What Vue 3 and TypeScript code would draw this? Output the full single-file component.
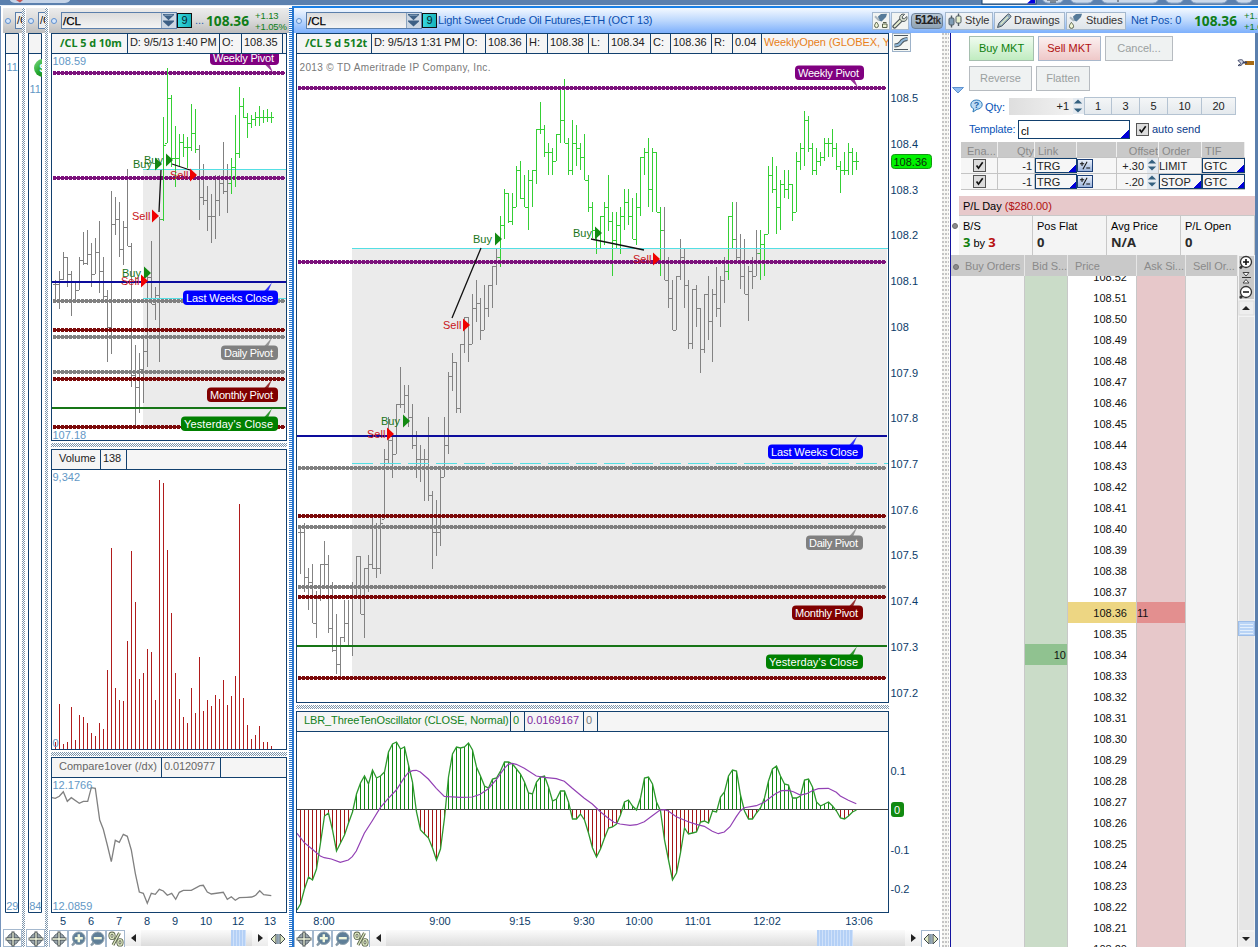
<script setup lang="ts">
interface Bar { x: number; hi: number; lo: number; open: number; close: number; up: boolean }
interface Level { y: number; kind: 'purple' | 'maroon' | 'gray' }
interface Tag { text: string; x: number; y: number; w: number; tx: number; len: number; fill: string; stem: string }
interface Signal { side: 'Buy' | 'Sell'; x: number; y: number; arrow: number }

const STEP = 4

// Each row is high, low, close in plot pixels
const rawMain: number[][] = [
  [528,574,532],[523,592,577],[568,610,582],[564,623,623],[591,638,598],[564,601,564],[541,585,564],[555,633,628],[582,652,650],[614,674,664],
  [637,677,637],[600,642,623],[600,646,645],[582,656,596],[556,597,556],[556,614,614],[568,638,568],[555,592,564],[517,569,568],[523,578,568],
  [517,574,523],[449,519,459],[417,463,440],[433,478,454],[404,454,404],[367,408,404],[385,413,395],[385,427,417],[404,449,445],[431,478,459],
  [445,482,459],[449,501,459],[417,501,495],[491,569,532],[500,556,532],[469,546,477],[417,477,445],[372,454,376],[353,391,362],[362,413,408],
  [344,413,344],[317,353,317],[317,362,344],[294,344,308],[280,322,303],[298,340,330],[285,330,308],[285,317,285],[266,308,266],[249,285,257],
  [216,267,225],[189,239,193],[193,223,221],[193,225,207],[166,207,170],[161,199,198],[175,207,207],[170,230,180],[170,207,170],[129,184,129],
  [102,134,129],[125,157,152],[143,175,152],[148,175,161],[134,161,134],[88,143,120],[79,143,143],[138,175,170],[120,175,143],[125,166,148],
  [143,170,157],[134,180,180],[175,212,207],[202,238,230],[230,254,240],[216,248,216],[202,245,207],[175,231,221],[212,276,240],[212,248,225],
  [207,254,216],[189,230,202],[189,225,216],[198,239,239],[193,245,207],[157,216,157],[148,175,152],[138,207,189],[148,212,152],[152,212,212],
  [207,276,230],[207,280,280],[257,308,298],[280,330,330],[276,330,276],[239,280,257],[248,308,285],[280,349,343],[289,349,289],[285,327,308],
  [308,373,349],[294,353,294],[276,340,321],[289,362,294],[267,317,308],[276,327,280],[257,303,271],[216,280,216],[202,248,239],[202,262,257],
  [234,289,276],[239,294,294],[266,321,271],[257,289,276],[230,276,253],[230,280,244],[234,276,234],[166,234,175],[157,193,189],[166,234,207],
  [180,230,184],[170,198,189],[170,199,184],[184,221,212],[152,212,161],[143,170,148],[111,166,120],[116,152,148],[143,175,170],[148,175,161],
  [152,166,157],[138,161,143],[138,157,143],[129,157,148],[143,170,166],[161,193,170],[152,175,170],[143,175,152],[148,175,161],[152,170,161],
]
const rawSide: number[][] = [
  [280,300,284],[271,309,279],[252,280,257],[257,287,274],[271,316,300],[282,300,290],[257,290,260],[232,265,263],[230,265,254],[243,287,274],
  [238,274,252],[221,293,271],[257,300,296],[290,362,327],[191,354,224],[197,235,219],[202,257,249],[221,265,227],[169,246,246],[243,387,375],
  [345,425,387],[353,413,369],[337,403,351],[273,367,277],[241,304,304],[287,320,295],[217,362,219],[117,221,145],[68,143,98],[95,167,158],
  [126,187,158],[134,167,142],[134,157,147],[137,168,147],[104,151,133],[109,153,149],[145,220,197],[164,205,200],[186,231,216],[194,243,216],
  [175,239,200],[175,216,183],[142,194,191],[164,213,183],[158,194,167],[115,187,153],[87,158,106],[98,118,117],[113,138,123],[115,128,119],
  [112,126,117],[106,126,117],[110,123,117],[109,122,117],[112,123,117],
]
const build = (raw: number[][], x0: number, up: (k: number) => boolean): Bar[] =>
  raw.map(([hi, lo, close], k) => ({ x: x0 + k * STEP, hi, lo, close, open: k ? raw[k - 1][2] : close, up: up(k) }))

const mainBars = build(rawMain, 300, k => (k >= 50 && k <= 90) || k === 107 || k === 108 || k >= 115)
const sideBars = build(rawSide, 55, k => (k >= 27 && k <= 35) || k >= 44)

// One path per colour; ticks are clamped to the bar's own range
function barPath(bars: Bar[], up: boolean): string {
  return bars.filter(b => b.up === up).map(b => {
    const open = Math.min(b.lo, Math.max(b.hi, b.open))
    return `M${b.x} ${b.hi}h1V${b.lo}h-1zM${b.x - 2} ${open}h2v1h-2zM${b.x + 1} ${b.close}h2v1h-2z`
  }).join('')
}

const volume = [742,704,744,742,707,740,715,717,723,733,736,723,729,670,548,688,700,701,641,551,602,679,673,649,652,700,480,483,550,613,673,699,717,723,688,713,657,711,700,706,695,699,680,705,696,676,504,698,725,739,735,726,742,742,746]
const volumePath = volume.map((y, k) => `M${55 + k * STEP} ${y}h1V749h-1z`).join('')

const compare = '52,797.7 55.3,798.3 59.3,796.3 63.3,791.7 67.3,801.3 71.3,797.7 79.3,803.3 83.3,801.3 87.7,801.3 91.3,787.7 95.3,788.3 99.7,820 103.3,829.3 107.3,845 111.3,861.7 115.3,840.3 119.3,842.3 123.3,834.3 127.3,836.3 131.3,850 135.3,873.3 139.3,892 143.3,893.3 147.3,903.3 151.3,893.3 155.3,894.3 159.3,889.3 163.3,891 167.3,895.3 171.7,893.3 175.7,899.3 179.3,892.3 183.3,890.3 191.3,890.3 200,885.7 203.3,885.3 207.3,892 211.3,894 223.3,892.3 227.3,899.3 231.3,896.7 235.3,900.3 239.3,897.7 246.7,897.3 251.7,897 255.7,895.3 259.7,890.7 263.7,894.7 271.3,895.7'

const osc = [904,889,877,880,869,843,816,813,830,851,843,835,823,812,794,783,776,784,770,778,776,772,752,744,742,749,747,765,782,812,830,834,838,848,860,849,818,777,754,747,748,747,743,750,767,776,786,788,779,778,771,762,762,764,769,774,782,793,794,782,777,776,787,801,799,791,791,802,819,819,814,820,833,848,857,849,838,828,827,824,815,802,800,806,810,798,778,777,784,802,811,840,860,880,873,853,828,834,833,832,822,821,823,811,812,797,792,776,770,771,795,811,819,819,813,808,798,781,769,766,776,784,785,798,798,796,780,779,787,802,806,804,802,806,811,818,819,816,812,810]
const oscLine = '297,910 ' + osc.map((y, k) => `${300.5 + k * STEP},${y}`).join(' ')
const oscUp = osc.map((y, k) => y < 809 ? `M${300 + k * STEP} ${y}h1V809h-1z` : '').join('')
const oscDown = osc.map((y, k) => y > 810 ? `M${300 + k * STEP} 810h1V${y}h-1z` : '').join('')

const scale = (ox: number, pts: number[][]) => pts.map(([x, y]) => `${(ox + x / 3).toFixed(1)},${(705 + y / 3).toFixed(1)}`).join(' ')
const signalLine = scale(290, [[21,385],[43,413],[67,433],[91,453],[103,458],[124,462],[151,472],[175,465],[187,455],[199,438],[223,385],[247,347],[271,308],[295,280],[319,255],[343,218],[355,203],[367,197],[379,196],[391,201],[415,222],[439,250],[463,274],[475,275],[511,277],[547,276],[571,268],[595,251],[619,224],[643,190],[655,178],[667,175],[679,178],[703,190],[739,213],[763,217],[799,221],[823,229],[847,250],[883,280],[907,297],[931,320],[955,340]])
  + ' ' + scale(610, [[12,352],[30,357],[60,361],[80,359],[103,350],[127,332],[150,315],[163,314],[175,318],[199,335],[235,350],[259,358],[283,364],[307,379],[325,386],[343,381],[360,365],[379,335],[391,318],[403,308],[439,302],[463,292],[487,273],[499,265],[515,257],[535,256],[550,260],[571,270],[590,266],[607,257],[625,251],[655,250],[679,262],[691,273],[715,286],[739,296]])

const mainLevels: Level[] = [
  { y: 88, kind: 'purple' }, { y: 262, kind: 'purple' }, { y: 468, kind: 'gray' }, { y: 516, kind: 'maroon' },
  { y: 527, kind: 'gray' }, { y: 587, kind: 'gray' }, { y: 597, kind: 'maroon' }, { y: 678, kind: 'maroon' },
]
const sideLevels: Level[] = [
  { y: 73, kind: 'purple' }, { y: 178, kind: 'purple' }, { y: 301, kind: 'gray' }, { y: 330, kind: 'maroon' },
  { y: 337, kind: 'gray' }, { y: 372, kind: 'gray' }, { y: 379, kind: 'maroon' }, { y: 427, kind: 'maroon' },
]
const up = (r: number, y: number) => `${r - 14},${y + 1} ${r - 6},${y - 8} ${r - 10},${y + 1}`
const down = (r: number, y: number) => `${r - 15},${y + 13} ${r - 6},${y + 22} ${r - 10},${y + 13}`
const tag = (text: string, x: number, y: number, r: number, fill: string, flip = false): Tag =>
  ({ text, x, y, w: r - x, tx: x + 3, len: r - x - 8, fill, stem: flip ? down(r, y) : up(r, y) })
const mainTags: Tag[] = [
  tag('Weekly Pivot', 795, 65.5, 864, '#800080', true), tag('Last Weeks Close', 768, 444.5, 863, '#0000ff'),
  tag('Daily Pivot', 806, 535.5, 863, '#808080'), tag('Monthly Pivot', 792, 605.5, 863, '#800000'),
  tag("Yesterday's Close", 766, 654.5, 863, '#008000'),
]
const sideTags: Tag[] = [
  tag('Weekly Pivot', 210, 50.5, 279, '#800080', true), tag('Last Weeks Close', 183, 290.5, 278, '#0000ff'),
  tag('Daily Pivot', 221, 345.5, 278, '#808080'), tag('Monthly Pivot', 207, 387.5, 278, '#800000'),
  tag("Yesterday's Close", 181, 416.5, 278, '#008000'),
]
const mainSignals: Signal[] = [
  { side: 'Buy', x: 473, y: 239, arrow: 495 }, { side: 'Sell', x: 443, y: 325, arrow: 463 },
  { side: 'Buy', x: 573, y: 233, arrow: 595 }, { side: 'Sell', x: 633, y: 259, arrow: 653 },
  { side: 'Buy', x: 381, y: 421, arrow: 403 }, { side: 'Sell', x: 367, y: 434, arrow: 387 },
]
const sideSignals: Signal[] = [
  { side: 'Buy', x: 133, y: 164, arrow: 155 }, { side: 'Buy', x: 144, y: 160, arrow: 166 },
  { side: 'Sell', x: 170, y: 175, arrow: 190 }, { side: 'Sell', x: 132, y: 216, arrow: 152 },
  { side: 'Buy', x: 122, y: 273, arrow: 144 }, { side: 'Sell', x: 121, y: 281, arrow: 141 },
]
const priceAxis: [string, number][] = [
  ['108.5', 98], ['108.4', 144], ['108.3', 190], ['108.2', 235], ['108.1', 281], ['108', 327], ['107.9', 373],
  ['107.8', 418], ['107.7', 464], ['107.6', 510], ['107.5', 555], ['107.4', 601], ['107.3', 647], ['107.2', 693],
]
const sideTimes: [string, number][] = [['5', 63], ['6', 91], ['7', 119], ['8', 147], ['9', 175], ['10', 206], ['12', 238], ['13', 270]]
const mainTimes: [string, number][] = [['8:00', 324], ['9:00', 440], ['9:15', 520], ['9:30', 584], ['10:00', 639], ['11:01', 698], ['12:02', 767], ['13:06', 859]]

const mainInfo = ['O:', '108.36', 'H:', '108.38', 'L:', '108.34', 'C:', '108.36', 'R:', '0.04']
const tools = ['i-cross', 'i-plus', 'i-minus', 'i-percent']
const quantities = [1, 3, 5, 10, 20]
const orders = [
  { offset: '+.30', type: 'LIMIT', boxed: false },
  { offset: '-.20', type: 'STOP', boxed: true },
]
const stats = [['Pos Flat', '0'], ['Avg Price', 'N/A'], ['P/L Open', '0']]
const ladder = Array.from({ length: 33 }, (_, i) => (108.52 - i * 0.01).toFixed(2))
</script>

<template>
  <div class="app">
    <svg class="defs" width="0" height="0">
      <defs>
        <linearGradient id="ball" x1="0" x2="1" y1="0" y2="1"><stop offset="0" stop-color="#7fdc84" /><stop offset=".5" stop-color="#23a62d" /><stop offset="1" stop-color="#0c6b16" /></linearGradient>
        <symbol id="i-cross" viewBox="0 0 16 16">
          <circle cx="8" cy="8" r="5.6" fill="#9ba7ae" stroke="#5a666d" />
          <path d="M8 .6v14.8M.6 8h14.8" stroke="#3f474b" stroke-width="3" />
          <path d="M8 1.4v13.2M1.4 8h13.2" stroke="#f2f8dd" stroke-width="1.3" />
        </symbol>
        <symbol id="i-plus" viewBox="0 0 16 16">
          <path d="M4.5 9.5 1.2 13.8l1.6 1.4 4-3.4z" fill="#8598a6" />
          <circle cx="8.8" cy="7.2" r="6.3" fill="#5f7f98" stroke="#90a3af" />
          <path d="M8.8 3.2v8M4.8 7.2h8" stroke="#f2f8dd" stroke-width="2.4" />
        </symbol>
        <symbol id="i-minus" viewBox="0 0 16 16">
          <path d="M4.5 9.5 1.2 13.8l1.6 1.4 4-3.4z" fill="#8598a6" />
          <circle cx="8.8" cy="7.2" r="6.3" fill="#5f7f98" stroke="#90a3af" />
          <path d="M4.8 7.2h8" stroke="#f2f8dd" stroke-width="2.4" />
        </symbol>
        <symbol id="i-percent" viewBox="0 0 16 16">
          <g fill="none" stroke="#566047" stroke-width="3"><ellipse cx="4" cy="4.8" rx="2.1" ry="2.7" /><ellipse cx="12" cy="11.4" rx="2.1" ry="2.7" /><path d="M11.5 2 5 14" /></g>
          <g fill="none" stroke="#dfe9c4" stroke-width="1.3"><ellipse cx="4" cy="4.8" rx="2.1" ry="2.7" /><ellipse cx="12" cy="11.4" rx="2.1" ry="2.7" /><path d="M11.5 2 5 14" /></g>
        </symbol>
        <symbol id="i-expand" viewBox="0 0 16 16">
          <path d="M1 8 6 3v10zM15 8l-5-5v10z" fill="#dfe9c4" stroke="#3f474b" stroke-linejoin="round" />
          <path d="M7.3 3v10M8.8 3v10" stroke="#6b8599" stroke-width="1" />
        </symbol>
        <symbol id="i-double" viewBox="0 0 13 14">
          <path d="M1 1h11v1L6.5 7.2 1 2zM1 7.6h11v1L6.5 13.6 1 8.6z" fill="#3d6085" /><path d="M2.5 2.2h8" stroke="#8aa7c4" />
        </symbol>
        <symbol id="i-flask" viewBox="0 0 16 16">
          <path d="M5 3.5 8 1l6-.2-1 3.2L8.6 8.4 6 7.6z" fill="#557a99" /><path d="M2 4.2 6 7.8" stroke="#a9b6bf" stroke-width="2" />
          <path d="M3.4 9.4c-1.4 2-2 2.6-2 3.9a2.1 2.1 0 0 0 4.2 0c0-1.3-.8-1.9-2.2-3.9z" fill="#eef5d5" stroke="#58614b" />
        </symbol>
        <symbol id="i-flask2" viewBox="0 0 16 16">
          <path d="M5 3.500 8 1l6-.2-1 3.200L8.600 8.400 6 7.600z" fill="#557a99" /><path d="M2 3.200 6 7.200" stroke="#a9b6bf" stroke-width="2" />
          <path d="M3.400 9c-1.200 1.800-1.800 2.600-1.800 3.700a1.900 1.900 0 0 0 3.800 0c0-1.100-.7-1.900-2-3.700zM9.500 11h4.500v3.500H9.500zM10 9.500h3.500" fill="#eef5d5" stroke="#58614b" />
        </symbol>
        <symbol id="i-wrench" viewBox="0 0 16 16">
          <path d="M2.5 13.5 9 7" stroke="#4d565b" stroke-width="4.2" stroke-linecap="round" /><path d="M2.6 13.4 9 7" stroke="#e8f0d2" stroke-width="2" stroke-linecap="round" />
          <path d="M12.6 1.4 10.3 3.6l.2 2 2 .2 2.2-2.3c1 2.6-.9 5.300-3.700 4.900-2.800-.3-4.200-3.300-2.800-5.600.9-1.400 2.600-2.100 4.400-1.400z" fill="#d9e0cf" stroke="#4d565b" />
        </symbol>
        <symbol id="i-candles" viewBox="0 0 16 16">
          <path d="M4.5 2.5v12M11.5 .5v12.5" stroke="#4e5a62" stroke-width="1.4" /><rect x="2" y="5" width="5" height="7" rx="1.2" fill="#7f9db5" stroke="#4e5a62" /><rect x="9" y="3" width="5" height="7" rx="1.2" fill="#e6efcd" stroke="#4e5a62" />
        </symbol>
        <symbol id="i-pencil" viewBox="0 0 16 16">
          <path d="m1.500 14.500 1.300-4.300 8.600-8.700a1.500 1.500 0 0 1 2.200 0l.8.8a1.500 1.500 0 0 1 0 2.200l-8.600 8.600z" fill="#90a9bb" stroke="#4e5a62" /><path d="m4.500 11.500 7.500-7.700" stroke="#dce8c8" stroke-width="1.5" />
        </symbol>
        <symbol id="i-up" viewBox="0 0 12 8"><path d="M6 1.500 11 6.500H1z" fill="#34607f" /></symbol>
        <symbol id="i-check" viewBox="0 0 13 13">
          <path d="M3 6.600 5.300 9.600 10.300 2.600" fill="none" stroke="#111" stroke-width="2" />
        </symbol>
      </defs>
    </svg>

    <header class="strip">
      <svg width="1258" height="6" viewBox="0 0 1258 6">
        <rect width="1258" height="5" fill="#5b80ae" /><rect y="5" width="1258" height="1" fill="#e9f0f8" />
        <rect x="9" y="-12" width="62" height="15" rx="6" fill="#c5d4e8" /><path d="M16 0h7l-3 2.500z" fill="#c45454" />
        <rect x="982" y="-12" width="54" height="16" fill="#fff" stroke="#12406e" /><path d="M1027 3.500 1035 -4v7.500z" fill="#0000e0" />
        <g fill="#ccd9ea" stroke="#8ea9cb"><rect x="1042" y="-12" width="22" height="15" rx="6" /><rect x="1070" y="-12" width="24" height="15" rx="6" /><rect x="1101" y="-12" width="58" height="15" rx="6" /><rect x="1165" y="-12" width="19" height="15" rx="6" /><rect x="1190" y="-12" width="38" height="15" rx="6" /><rect x="1235" y="-12" width="18" height="15" rx="6" /></g>
        <path d="M1047 0h11M1050 2h6" stroke="#333c46" /><path d="M1118 0v2" stroke="#333c46" />
      </svg>
    </header>

    <div class="body">
      <div class="edge" />

      <section class="slim">
        <div class="head"><i class="ring" /><span class="stub">/C</span></div>
        <svg width="16" height="880" viewBox="3 33 16 880">
          <path d="M5.500 33v879.500H18.500V33.500H5.500M5 53.500h14" fill="none" stroke="#12406e" /><rect x="6" y="34" width="12" height="19" fill="#f4f4f4" />
          <text x="6.5" y="71" class="soft">11</text><text x="6.2" y="910" class="soft">29</text>
        </svg>
        <div class="slim-tool"><svg><use href="#i-cross" /></svg></div>
      </section>
      <div class="hatch" />
      <section class="slim">
        <div class="head"><i class="ring" /><span class="stub">/C</span></div>
        <svg width="16" height="880" viewBox="26 33 16 880">
          <path d="M28.500 33v879.500H41.500V33.500H28.500M28 53.500h14" fill="none" stroke="#12406e" /><rect x="29" y="34" width="12" height="19" fill="#f4f4f4" />
          <circle cx="43" cy="68" r="9" fill="url(#ball)" /><text x="39.5" y="72" class="ball">$</text>
          <text x="29.5" y="93" class="soft">11</text><text x="29.2" y="910" class="soft">84</text>
        </svg>
        <div class="slim-tool"><svg><use href="#i-cross" /></svg></div>
      </section>
      <div class="hatch" />

      <section class="side">
        <div class="head side-head">
          <i class="ring" />
          <div class="symbol"><b>/CL</b><span><svg><use href="#i-double" /></svg></span></div>
          <em class="nine">9</em><span class="dots">...</span><strong class="last">108.36</strong>
          <div class="delta"><span>+1.13</span><span>+1.05%</span></div>
        </div>
        <div class="frame side-frame">
          <div class="info side-info"><b>/CL 5 d 10m</b><span>D: 9/5/13 1:40 PM</span><span>O:</span><span>108.35</span><span /></div>
          <svg width="234" height="386" viewBox="52 54 234 386">
            <rect x="143" y="169" width="143" height="258" fill="#ebebeb" />
            <path :d="barPath(sideBars, false)" fill="#808080" />
            <path d="M143 169.500H286M143 298.500H286" stroke="#54dfe4" />
            <g v-for="l in sideLevels" :key="l.y" :class="l.kind">
              <path :d="`M53 ${l.y}H285`" stroke-width="2" /><path :d="`M53 ${l.y}H285`" stroke-width="4" stroke-dasharray="3 1" />
            </g>
            <path d="M52 282H286" stroke="#0c0c9c" stroke-width="2" /><path d="M52 408H286" stroke="#177517" stroke-width="2" />
            <path :d="barPath(sideBars, true)" fill="#35cf35" />
            <path d="M159 212 161 170M172 164 190 170" stroke="#111" stroke-width="1.3" />
            <g v-for="(s, i) in sideSignals" :key="i" :class="s.side">
              <text :x="s.x" :y="s.y + 4">{{ s.side }}</text><path :d="`M${s.arrow} ${s.y - 6.5}l7 6.500-7 6.500z`" />
            </g>
            <g v-for="t in sideTags" :key="t.text">
              <polygon :points="t.stem" :fill="t.fill" fill-opacity=".8" /><rect :x="t.x" :y="t.y" :width="t.w" height="14.5" rx="4" :fill="t.fill" />
              <text :x="t.tx" :y="t.y + 11.5" :textLength="t.len" fill="#fff">{{ t.text }}</text>
            </g>
            <text x="52.5" y="65" class="soft">108.59</text><text x="52.5" y="439" class="soft">107.18</text>
          </svg>
        </div>
        <div class="gap side-gap" />
        <div class="frame side-frame">
          <div class="info vol-info"><span class="pad">Volume</span><span>138</span><span /></div>
          <svg width="234" height="279" viewBox="52 470 234 279">
            <path :d="volumePath" fill="#b01c1c" />
            <text x="52.5" y="481" class="soft">9,342</text><text x="52.5" y="747" class="soft">0</text>
          </svg>
        </div>
        <div class="gap side-gap low-gap" />
        <div class="frame side-frame">
          <div class="info cmp-info"><span class="pad">Compare1over (/dx)</span><span>0.0120977</span><span /></div>
          <svg width="234" height="134" viewBox="52 778 234 134">
            <polyline :points="compare" fill="none" stroke="#808080" stroke-width="1.3" />
            <text x="52.5" y="789" class="soft">12.1766</text><text x="52.5" y="910" class="soft">12.0859</text>
          </svg>
        </div>
        <svg width="240" height="17" viewBox="49 914 240 17">
          <text v-for="t in sideTimes" :key="t[0]" :x="t[1]" y="926" text-anchor="middle" class="axis">{{ t[0] }}</text>
        </svg>
        <div class="toolbar">
          <span v-for="t in tools" :key="t" class="tool"><svg><use :href="'#' + t" /></svg></span>
          <span class="nudge"><svg width="5" height="8" viewBox="0 0 5 8"><path d="M5 0v8L0 4z" fill="#222" /></svg></span><div class="track side-track"><i /></div><span class="nudge"><svg width="5" height="8" viewBox="0 0 5 8"><path d="M0 0v8l5-4z" fill="#222" /></svg></span>
          <span class="tool plain"><svg><use href="#i-expand" /></svg></span>
        </div>
      </section>
      <div class="blue-dots" />

      <section class="main">
        <div class="main-head">
          <i class="ring" />
          <div class="symbol"><b>/CL</b><span><svg><use href="#i-double" /></svg></span></div>
          <em class="nine">9</em><span class="title">Light Sweet Crude Oil Futures,ETH (OCT 13)</span>
          <span class="sq"><svg><use href="#i-flask2" /></svg></span><span class="sq"><svg><use href="#i-wrench" /></svg></span>
          <span class="ticks"><b>512</b>tk</span>
          <div class="menu">
            <span><svg><use href="#i-candles" /></svg>Style</span><span><svg><use href="#i-pencil" /></svg>Drawings</span><span><svg><use href="#i-flask" /></svg>Studies</span>
          </div>
          <span class="net">Net Pos: 0</span><strong class="last">108.36</strong>
          <div class="delta"><span>+1.13</span><span>+1.05%</span></div>
        </div>
        <div class="work">
          <div class="charts">
            <div class="chart-row">
              <div class="frame">
                <div class="info main-info">
                  <b>/CL 5 d 512t</b><span>D: 9/5/13 1:31 PM</span><span v-for="(c, i) in mainInfo" :key="i">{{ c }}</span><span class="orange">WeeklyOpen (GLOBEX, Y</span>
                </div>
                <svg width="591" height="648" viewBox="297 54 591 648">
                  <rect x="352" y="248" width="535" height="430" fill="#ebebeb" />
                  <path :d="barPath(mainBars, false)" fill="#838383" />
                  <path :d="barPath(mainBars, true)" fill="#35cf35" />
                  <path d="M352 248.500H888" stroke="#54dfe4" /><path d="M352 463.500H888" stroke="#54dfe4" stroke-dasharray="21 7" />
                  <g v-for="l in mainLevels" :key="l.y" :class="l.kind">
                    <path :d="`M298 ${l.y}H886`" stroke-width="2" /><path :d="`M298 ${l.y}H886`" stroke-width="4" stroke-dasharray="3 1" />
                  </g>
                  <path d="M297 436H887" stroke="#0c0c9c" stroke-width="2" /><path d="M297 646H887" stroke="#177517" stroke-width="2" />
                  <path d="M452 318 481 248M591 239 644 250" stroke="#111" stroke-width="1.3" />
                  <g v-for="(s, i) in mainSignals" :key="i" :class="s.side">
                    <text :x="s.x" :y="s.y + 4">{{ s.side }}</text><path :d="`M${s.arrow} ${s.y - 6.5}l7 6.500-7 6.500z`" />
                  </g>
                  <g v-for="t in mainTags" :key="t.text">
                    <polygon :points="t.stem" :fill="t.fill" fill-opacity=".8" /><rect :x="t.x" :y="t.y" :width="t.w" height="14.5" rx="4" :fill="t.fill" />
                    <text :x="t.tx" :y="t.y + 11.5" :textLength="t.len" fill="#fff">{{ t.text }}</text>
                  </g>
                  <text x="299.5" y="71" textLength="191" class="copy">2013 © TD Ameritrade IP Company, Inc.</text>
                </svg>
              </div>
              <svg width="52" height="670" viewBox="889 33 52 670">
                <rect x="892.5" y="33.5" width="18" height="18" fill="#f4f7f4" stroke="#9db2c9" /><path d="M894 35.500h14M894 49.500h14" stroke="#4e5a62" />
                <path d="M894.500 45.500c9 0 3.500-6 13-6.500" fill="none" stroke="#4e5a62" stroke-width="4" /><path d="M894.500 45.500c9 0 3.500-6 13-6.500" fill="none" stroke="#8fb9da" stroke-width="2" />
                <text v-for="p in priceAxis" :key="p[0]" x="890.5" :y="p[1] + 4" class="axis">{{ p[0] }}</text>
                <rect x="891.5" y="154.5" width="40" height="14" rx="3" fill="#00f200" stroke="#119911" /><text x="893.5" y="165.5" fill="#0b2b0b">108.36</text>
              </svg>
            </div>
            <div class="gap main-gap" />
            <div class="chart-row">
              <div class="frame">
                <div class="info osc-info"><span class="green pad">LBR_ThreeTenOscillator (CLOSE, Normal)</span><span class="green">0</span><span class="violet">0.0169167</span><span class="dim">0</span><span /></div>
                <svg width="591" height="180" viewBox="297 732 591 180">
                  <path :d="oscUp" fill="#138a13" /><path :d="oscDown" fill="#a51616" /><path d="M297 809.500H888" stroke="#444" />
                  <polyline :points="oscLine" fill="none" stroke="#2c982c" stroke-width="1.3" /><polyline :points="signalLine" fill="none" stroke="#9240b4" stroke-width="1.2" />
                </svg>
              </div>
              <svg width="52" height="202" viewBox="889 711 52 202">
                <text x="890.5" y="775" class="axis">0.1</text><text x="890.5" y="854" class="axis">-0.1</text><text x="890.5" y="893" class="axis">-0.2</text>
                <rect x="891" y="802" width="13" height="15" rx="3" fill="#118a11" /><text x="894" y="813.5" fill="#fff">0</text>
              </svg>
            </div>
            <svg width="648" height="17" viewBox="294 914 648 17">
              <text v-for="t in mainTimes" :key="t[0]" :x="t[1]" y="926" text-anchor="middle" class="axis">{{ t[0] }}</text>
            </svg>
            <div class="toolbar">
              <span v-for="t in tools" :key="t" class="tool"><svg><use :href="'#' + t" /></svg></span>
              <span class="nudge"><svg width="5" height="8" viewBox="0 0 5 8"><path d="M5 0v8L0 4z" fill="#222" /></svg></span><div class="track main-track"><i /></div><span class="nudge"><svg width="5" height="8" viewBox="0 0 5 8"><path d="M0 0v8l5-4z" fill="#222" /></svg></span>
              <span class="tool"><svg><use href="#i-expand" /></svg></span>
            </div>
          </div>
          <div class="grip" />
          <div class="order">
            <div class="entry">
              <svg class="fold" width="12" height="7" viewBox="0 0 12 7"><path d="M.5.500h11L6 6z" fill="#8fbdf0" stroke="#5f92cf" /></svg>
              <svg class="spanner" width="17" height="10" viewBox="0 0 17 10"><path d="M1 2.500c4-2 6 0 5 2.500s-3 3-5 2.500l3-2z" fill="#cfd5e6" stroke="#3d4465" /><path d="M8 5h9" stroke="#a76a14" stroke-width="4" /><path d="M6 4.500h4" stroke="#3d4465" stroke-width="2" /></svg>
              <div class="buttons"><button class="buy">Buy MKT</button><button class="sell">Sell MKT</button><button class="c">Cancel...</button></div>
              <div class="buttons second"><button class="r">Reverse</button><button class="f">Flatten</button></div>
              <div class="qty">
                <svg width="13" height="14" viewBox="0 0 13 14"><path d="M6.500 1c3.300 0 5.700 2 5.700 4.600S9.800 10.200 7 10.300L3 13l.6-3.300C1.700 9 .8 7.500.8 5.600.8 3 3.200 1 6.500 1z" fill="#bcdcf5" stroke="#2c7ab8" /><text x="3.8" y="9" fill="#1c62a6" class="q">?</text></svg>
                <span class="lbl">Qty:</span><span class="num">+1</span>
                <span class="spin"><svg><use href="#i-up" /></svg><svg class="flip"><use href="#i-up" /></svg></span>
                <span v-for="q in quantities" :key="q" class="preset" :class="'p' + q">{{ q }}</span>
              </div>
              <div class="template"><span class="lbl">Template:</span><span class="box">cl</span><span class="check"><svg><use href="#i-check" /></svg></span><span class="auto">auto send</span></div>
              <div class="legs">
                <div class="leg th"><span>Ena...</span><span>Qty</span><span>Link</span><span /><span>Offset</span><span>Order</span><span>TIF</span></div>
                <div v-for="o in orders" :key="o.type" class="leg">
                  <span class="ctr"><i class="check"><svg><use href="#i-check" /></svg></i></span><span class="rt">-1</span><span class="drop">TRG</span>
                  <span class="pm"><svg width="16" height="13" viewBox="0 0 16 13"><path d="M2 4.500h5M4.500 2v5M5.500 11 10.500 2M9.500 9.500h4.500" stroke="#111" stroke-width="1.2" /></svg></span>
                  <span class="off">{{ o.offset }}<i class="spin"><svg><use href="#i-up" /></svg><svg class="flip"><use href="#i-up" /></svg></i></span>
                  <span :class="o.boxed ? 'drop' : 'free'">{{ o.type }}</span><span class="drop">GTC</span>
                </div>
              </div>
            </div>
            <div class="pl">P/L Day <span>($280.00)</span></div>
            <div class="stats">
              <i class="dot" />
              <div><span>B/S</span><p><b class="g">3</b> by <b class="r">3</b></p></div>
              <div v-for="s in stats" :key="s[0]"><span>{{ s[0] }}</span><p><b>{{ s[1] }}</b></p></div>
            </div>
            <div class="book">
              <div class="ladder">
                <div class="cols lh"><span><i class="dot" />Buy Orders</span><span>Bid S...</span><span>Price</span><span>Ask Si...</span><span>Sell Or...</span></div>
                <div class="rows">
                  <div v-for="p in ladder" :key="p" class="cols row">
                    <span /><span class="bid" :class="{ hot: p === '108.34' }">{{ p === '108.34' ? '10' : '' }}</span>
                    <span class="price" :class="{ now: p === '108.36' }">{{ p }}</span>
                    <span class="ask" :class="{ hot: p === '108.36' }">{{ p === '108.36' ? '11' : '' }}</span><span />
                  </div>
                </div>
              </div>
              <svg width="17" height="692" viewBox="1238 255 17 692">
                <rect x="1238" y="255" width="17" height="692" fill="#f3f3f3" /><rect x="1239" y="256" width="15" height="43" fill="#c9c9c9" />
                <g fill="#fff" stroke="#333" stroke-width="1.3"><path d="M1240 268.500 1243 265M1240 298 1243 295" stroke-width="2.5" /><circle cx="1246" cy="262" r="5.5" /><circle cx="1246" cy="292" r="5.5" /></g>
                <path d="M1243 262h6M1246 259v6M1243 292h6" stroke="#111" stroke-width="1.6" />
                <path d="M1242 277.500h9" stroke="#333" /><path d="M1243 272.500h6l-3 3.500zM1243 283h6l-3-3.500z" fill="#fff" stroke="#444" />
                <rect x="1239" y="301" width="15" height="14" fill="#eee" stroke="#ddd" /><path d="M1242 310h8l-4-4z" fill="#222" />
                <rect x="1239" y="317" width="15" height="613" fill="#e6e6e6" />
                <rect x="1238.5" y="621.5" width="16" height="14" fill="#b9d4f6" stroke="#9dbde8" /><path d="M1240 624.500h13M1240 627.500h13M1240 630.500h13M1240 633.500h13" stroke="#e3effc" />
                <rect x="1239" y="932" width="15" height="14" fill="#eee" /><path d="M1242 937h8l-4 4z" fill="#222" />
              </svg>
            </div>
          </div>
          <div class="rim" />
        </div>
      </section>
    </div>
  </div>
</template>

<style scoped>
.app { width: 1258px; height: 947px; overflow: hidden; background: #fff; font: 11px/13px "Liberation Sans", Arial, sans-serif; color: #222; }
.app *, .app { box-sizing: border-box; }
.defs { position: absolute; }
svg { display: block; flex: none; }
i, em { font-style: normal; }
.strip { height: 6px; }
.body { display: flex; height: 941px; }
.body > * { flex: none; }
.edge { width: 3px; border-left: 1px solid #7695bd; }
.hatch, .gap { background: conic-gradient(#7d95ab 25%, #fff 0 50%, #7d95ab 0 75%, #fff 0) 0 0 / 2px 2px; }
.hatch { width: 3px; margin: 2px 1px 0 0; }
.gap { height: 4px; margin: 2px 0 2px 2px; }
.side-gap { width: 236px; }
.low-gap { margin-bottom: 1px; }
.main-gap { width: 593px; }
.blue-dots { width: 3px; margin-top: 2px; background: repeating-linear-gradient(#2f78cc 0 1px, #fff 1px 2px); }

.slim { width: 19px; padding-top: 2px; overflow: hidden; }
.head { height: 25px; display: flex; align-items: center; background: linear-gradient(#ececec, #dcdcdc 45%, #bdbdbd); }
.ring { flex: none; width: 6px; height: 6px; border: 1.5px solid #5d8fd0; border-radius: 50%; background: #d5e6fb; margin-left: 2px; }
.stub { flex: none; height: 17px; width: 16px; margin-left: 4px; border: 1px solid #5b7fab; background: #eee; color: #111; padding: 1px 1px; }
.slim-tool { width: 19px; height: 18px; margin-top: 16px; padding: 1px; border: 1px solid #a4b8ce; background: #fff; }
.slim-tool svg, .tool svg { width: 16px; height: 16px; }

.side { width: 240px; padding-top: 2px; }
.symbol { flex: none; display: flex; justify-content: space-between; width: 116px; height: 17px; margin-left: 4px; border: 1px solid #5b7fab; background: linear-gradient(#dcdcdc, #f4f4f4); }
.symbol b { padding: 2px 1px; font-size: 11.5px; font-weight: 500; color: #000; line-height: 12px; -webkit-text-stroke: .25px #000; }
.symbol span { width: 15px; background: #ccd7e3; border-left: 1px solid #8ba4bf; }
.symbol svg { width: 13px; height: 14px; }
.nine { flex: none; width: 15px; height: 15px; border: 1px solid #111; background: linear-gradient(90deg, #37d7de, #17b3bb); color: #06262b; text-align: center; }
.dots { color: #1f5fae; width: 12px; margin-left: 3px; }
.last { font: bold 13.7px/14px "Noto Sans", sans-serif; color: #0f7d18; width: 50px; }
.side .last { width: 49px; margin-left: -1px; }
.delta { font-size: 9.5px; line-height: 11px; color: #0f7d18; letter-spacing: -.1px; }
.delta span { display: block; }
.frame { border: 1px solid #12406e; width: 593px; }
.side-frame { width: 236px; margin-left: 2px; }
.info { display: grid; height: 20px; background: #f5f5f5; border-bottom: 1px solid #12406e; overflow: hidden; white-space: nowrap; line-height: 17px; }
.info > * { border-right: 1px solid #12406e; padding-left: 2px; overflow: hidden; }
.info > span:nth-child(2) { letter-spacing: -.12px; }
.info > :last-child { border-right: 0; }
.info b { font: bold 10.8px/17px "Noto Sans", sans-serif; color: #118020; padding-left: 8px; }
.info .pad { padding-left: 7px; }
.side-info { grid-template-columns: 76px 92px 22px 41px 1fr; }
.vol-info { grid-template-columns: 49px 26px 1fr; }
.cmp-info { grid-template-columns: 110px 59px 1fr; color: #666; }
.main-info { grid-template-columns: 75px 92px 22px 41px 21px 41px 20px 42px 20px 41px 21px 29px 1fr; }
.main-info .orange { letter-spacing: -.1px; }
.osc-info { grid-template-columns: 214px 14px 59px 14px 1fr; }
.osc-info .pad { letter-spacing: -.12px; }
.orange { color: #e8811a; }
.green { color: #118020; }
.violet { color: #7d28a0; }
.dim { color: #777; }
text { font: 11px "Liberation Sans", Arial, sans-serif; }
.soft { fill: #6398c6; }
.axis { fill: #0b3b69; }
.copy { fill: #777; font-size: 10px; }
.ball { fill: #fff; font-weight: bold; }
.q { font-weight: bold; font-size: 9px; }
.purple { stroke: #7c127c; }
.maroon { stroke: #7c0a0a; }
.gray { stroke: #808080; }
.purple, .maroon, .gray { fill: none; }
.Buy { fill: #128a12; }
.Sell { fill: #f00000; }
.Sell text { fill: #c81420; }
.Buy text { fill: #1a751a; }

.toolbar { display: flex; height: 18px; }
.tool { flex: none; width: 19px; height: 18px; border: 1px solid #a4b8ce; padding: 0 1px; }
.plain { border: 0; padding: 1px 2px; }
.nudge { flex: none; width: 16px; height: 16px; padding: 4px 0 0 6px; background: linear-gradient(#fff, #ececec); }
.track { position: relative; height: 16px; background: linear-gradient(#fbfbfb, #dcdcdc); }
.track i { position: absolute; top: 0; height: 16px; background: repeating-linear-gradient(90deg, #b4d0f6 0 2px, #cfe1fa 2px 3px); }
.side-track { width: 111px; }
.side-track i { left: 90px; width: 15px; }
.main-track { width: 519px; }
.main-track i { left: 431px; width: 36px; }

.main { width: 966px; border-left: 2px solid #2474ce; border-top: 2px solid #1b80e6; }
.main-head { height: 25px; display: flex; align-items: center; overflow: hidden; background: linear-gradient(#f4f9ff, #bdd8fd 50%, #7db0fc); white-space: nowrap; }
.main-head > * { flex: none; }
.title { width: 434px; margin-left: 1px; color: #0b4fb0; letter-spacing: -.16px; }
.sq { width: 18px; height: 18px; border: 1px solid #a4b8ce; background: #f2f4f2; }
.sq svg { width: 16px; height: 16px; }
.sq + .sq { margin-left: 1px; }
.ticks { width: 32px; height: 16px; margin: 0 2px; padding-left: 3px; border: 1px solid #6d8299; border-radius: 4px; background: linear-gradient(#b9c8d5, #8da1b3); font-size: 10px; line-height: 13px; color: #333; font-weight: bold; letter-spacing: -.4px; }
.ticks b { font-size: 12px; letter-spacing: -.8px; color: #222; }
.menu { display: flex; gap: 1px; }
.menu span { display: flex; align-items: center; height: 18px; background: linear-gradient(#f2f4f6, #dfe5ea); border: 1px solid #a4b8ce; color: #333; }
.menu span:nth-child(1) { width: 48px; }
.menu span:nth-child(2) { width: 71px; }
.menu span:nth-child(3) { width: 60px; }
.menu svg { width: 16px; height: 16px; margin: 0 2px 0 1px; }
.net { width: 63px; margin-left: 5px; color: #0b4fb0; letter-spacing: -.1px; }

.work { display: flex; height: 914px; }
.charts { flex: none; width: 648px; }
.chart-row { display: flex; padding-left: 2px; }
.grip { flex: none; width: 7px; background: radial-gradient(circle at 1px 1px, #c4c4c4 .8px, #f7f7f4 .9px) 0 0 / 3px 4px; }
.order { flex: none; width: 305px; border-left: 1px solid #1414a0; margin-left: 1px; height: 914px; display: flex; flex-direction: column; }
.rim { flex: none; width: 4px; background: #5b80ae; }
.entry { position: relative; height: 163px; flex: none; padding: 3px 0 0 18px; }
.fold { position: absolute; left: 1px; top: 54px; }
.spanner { position: absolute; left: 286px; top: 25px; }
.buttons { display: flex; gap: 4px; height: 25px; }
.second { margin-top: 5px; }
button { font: inherit; padding: 0; border: 1px solid #b6bbc0; background: #eff2f2; color: #9aa0a0; height: 25px; }
.buy { width: 65px; color: #0d800d; background: linear-gradient(#f0fbf0, #c0ecc0); border-color: #a5bfae; }
.sell { width: 63px; color: #b01010; background: linear-gradient(#fbf0f0, #efc8c8); border-color: #a9b8cc; }
.c { width: 68px; }
button.r { width: 63px; }
.f { width: 54px; }
.qty { display: flex; align-items: center; margin-top: 6px; height: 18px; padding-left: 1px; }
.lbl { color: #0b55b8; }
.qty .lbl { width: 26px; padding-left: 2px; padding-top: 2px; }
.num { width: 64px; height: 17px; line-height: 17px; padding-right: 4px; text-align: right; background: linear-gradient(90deg, #dedede, #f2f2f2); }
.spin { display: flex; flex-direction: column; gap: 2px; width: 11px; background: #e4eaf0; }
.spin svg { width: 10px; height: 7px; }
.flip { transform: scaleY(-1); }
.preset { height: 18px; line-height: 16px; text-align: center; border: 1px solid #b4c3d2; background: linear-gradient(#f4f6f7, #e4e9ed); width: 28px; }
.preset + .preset { border-left-width: 0; }
.p10, .p20 { width: 34px; }
.template { display: flex; align-items: center; height: 19px; margin-top: 5px; }
.template .lbl { width: 49px; letter-spacing: -.15px; }
.box { width: 112px; height: 19px; border: 1px solid #12406e; padding: 4px 2px; color: #000; background: linear-gradient(135deg, #0000 50%, #0000d8 0) 100% 100% / 8px 8px no-repeat; }
.check { display: block; width: 13px; height: 13px; border: 1px solid #555; background: #dcdcdc; }
.template .check { margin: 0 3px 0 6px; }
.check svg { width: 11px; height: 11px; }
.auto { color: #0b3b8a; }
.legs { margin: 3px 0 0 -8px; width: 284px; }
.leg { display: grid; grid-template-columns: 37px 37px 42px 40px 42px 43px 43px; height: 16px; border-bottom: 1px solid #c4c4c4; line-height: 16px; background: #f6f6f6; }
.leg > span { border-right: 1px solid #c4c4c4; overflow: hidden; }
.th { background: #c9c9c9; color: #8a8a8a; line-height: 18px; }
.th > span { padding-left: 3px; border-color: #eee; }
.th > span:nth-child(1) { padding-left: 6px; }
.th > span:nth-child(2), .th > span:nth-child(5), .leg .rt { text-align: right; }
.leg .rt { padding-right: 2px; }
.ctr { display: flex; justify-content: center; padding-top: 1px; }
.leg > .drop { border: 1px solid #12406e; padding-left: 1px; line-height: 14px; background: linear-gradient(135deg, #0000 50%, #0000d8 0) 100% 100% / 7px 7px no-repeat, #f6f6f6; }
.pm svg { margin-top: 1px; border: 1px solid #1c3f78; background: linear-gradient(#eaf0fa, #9db5dc); }
.off { display: flex; justify-content: flex-end; }
.off .spin { margin-left: 3px; gap: 0; }
.pl { flex: none; margin: 0 0 0 8px; height: 20px; background: #e7c9cb; border-bottom: 1px solid #c8c8c8; padding: 4px; color: #000; }
.pl span { color: #b01010; }
.stats { position: relative; flex: none; display: flex; height: 39px; margin-left: 8px; background: #f4f4f4; }
.stats > div { width: 74px; border-right: 1px solid #c8c8c8; padding: 4px 4px 0; color: #000; }
.stats p { margin: 2px 0 0; line-height: 17px; }
.stats b { font: bold 13px/15px "Noto Sans", sans-serif; color: #2b2b2b; }
.stats .g { color: #108010; }
.stats .r { color: #b80f0f; }
.dot { display: inline-block; width: 6px; height: 6px; border-radius: 50%; background: #8b8b8b; border: 1px solid #707070; }
.stats > .dot { position: absolute; left: -7px; top: 7px; }
.book { display: flex; height: 692px; }
.ladder { width: 287px; overflow: hidden; display: flex; flex-direction: column; }
.cols { display: grid; grid-template-columns: 74px 43px 69px 49px 52px; }
.lh { height: 21px; flex: none; background: #c9c9c9; color: #8a8a8a; line-height: 22px; }
.lh span { border-right: 1px solid #e6e6e6; padding-left: 7px; overflow: hidden; white-space: nowrap; letter-spacing: -.05px; }
.lh span:first-child { padding-left: 2px; }
.lh .dot { margin-right: 6px; }
.rows { flex: 1; overflow: hidden; }
.row { height: 21px; line-height: 23px; }
.row:first-child { margin-top: -10px; }
.row > span { border-right: 1px solid #c8c8c8; border-bottom: 1px solid #c8c8c8; background: #f4f4f4; color: #111; }
.row > .bid { background: #cadcc8; border-bottom-color: #c3d3c2; text-align: right; padding-right: 1px; }
.row > .ask { background: #e7c8ca; border-bottom-color: #dcc0c2; }
.row > .bid.hot { background: #90c290; }
.row > .ask.hot { background: #e38f8f; }
.row > .price { background: #fff; text-align: right; padding-right: 9px; }
.row > .now { background: #edd683; }
</style>
